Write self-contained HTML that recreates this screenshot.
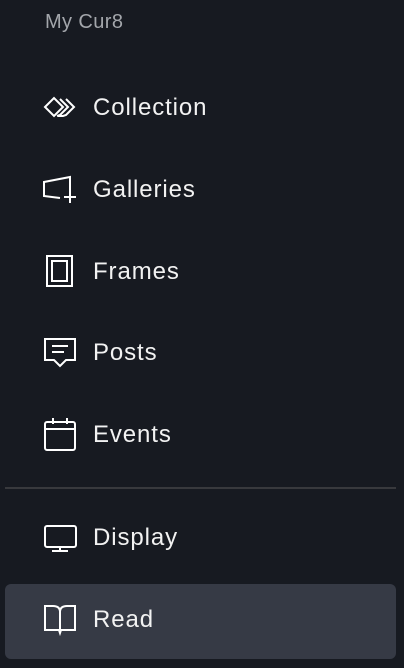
<!DOCTYPE html>
<html><head><style>
body{margin:0;width:404px;height:668px;background:#171a21;overflow:hidden;font-family:"Liberation Sans",sans-serif;color:#f2f2f2;position:relative}
.h{position:absolute;left:45px;top:11px;font-size:20px;color:#a3a6ab;letter-spacing:0.4px}
.t{position:absolute;left:93px;font-size:24px;line-height:28px;letter-spacing:0.9px}
.div{position:absolute;left:5px;width:391px;top:487px;height:2px;background:#38393d}
.sel{position:absolute;left:5px;top:584px;width:391px;height:75px;background:#363a45;border-radius:6px}
svg{position:absolute;left:0;top:0}
</style></head><body>
<div class="h">My Cur8</div>
<div class="div"></div>
<div class="sel"></div>
<div class="t" style="top:94px">Collection</div>
<div class="t" style="top:176px">Galleries</div>
<div class="t" style="top:258px">Frames</div>
<div class="t" style="top:339px">Posts</div>
<div class="t" style="top:421px">Events</div>
<div class="t" style="top:524px">Display</div>
<div class="t" style="top:606px">Read</div>
<svg width="404" height="668" viewBox="0 0 404 668" fill="none" stroke="#fff" stroke-width="2">
<path d="M45 107 L54 98 L63 107 L54 116 Z"/>
<path d="M60 99 L68 107 L60 115 M57 116 L60 115"/>
<path d="M66 99 L74 107 L66 115 L63 116 L58 116"/>
<path d="M70 192 V177 L44 182 V196 L60 198"/>
<path d="M70 191 V203 M64 197 H76"/>
<rect x="47" y="256" width="25" height="30"/>
<rect x="52" y="261" width="15" height="20"/>
<path d="M45 339 H75 V360 H66 L60 366 L54 360 H45 Z"/>
<path d="M52 346 H68 M52 352 H64"/>
<rect x="45" y="422" width="30" height="28" rx="2"/>
<path d="M45 429 H75 M53 418 V424 M67 418 V424"/>
<rect x="45" y="526" width="31" height="21" rx="2"/>
<path d="M60 547 V551 M52 551 H68"/>
<path d="M60 633 L59 630 H45 V606 H53 Q60 606 60 612 Q60 606 67 606 H75 V630 H61 Z"/>
<path d="M60 612 V630"/>
</svg>
</body></html>
